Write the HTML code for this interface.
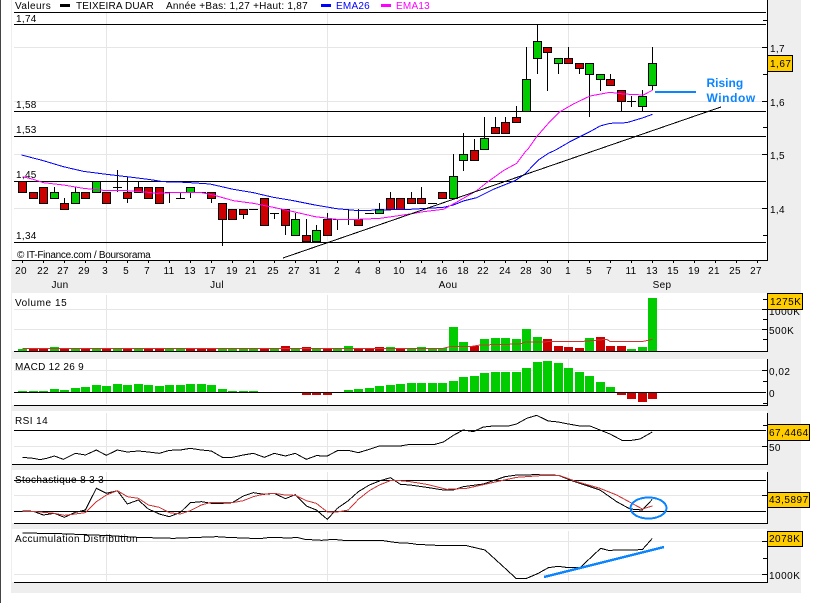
<!DOCTYPE html>
<html><head><meta charset="utf-8"><style>
html,body{margin:0;padding:0;background:#fff}
svg{display:block}
text{font-family:"Liberation Sans",sans-serif;font-size:10px;fill:#000;letter-spacing:.3px}
.v{letter-spacing:.5px}
.t{shape-rendering:crispEdges}
.l{fill:none;stroke-width:1;vector-effect:non-scaling-stroke;shape-rendering:crispEdges}
.b{stroke:#000}.r{stroke:#cc3333}.u{stroke:#0000ff}.m{stroke:#ff00ff}
</style></head><body>
<svg width="823" height="603" viewBox="0 0 823 603" xmlns="http://www.w3.org/2000/svg">
<rect width="823" height="603" fill="#fff"/>
<rect x="0" y="0" width="1" height="603" fill="#444"/>
<g class="t">
<rect x="11" y="261" width="790" height="332" fill="#eeeeee"/>
<rect x="768" y="0" width="33" height="593" fill="#eeeeee"/>
<rect x="11" y="0" width="1" height="261" fill="#eeeeee"/>
<rect x="12" y="293" width="755" height="58" fill="#fff"/>
<rect x="12" y="359" width="755" height="46" fill="#fff"/>
<rect x="12" y="411" width="755" height="53" fill="#fff"/>
<rect x="12" y="470" width="755" height="53" fill="#fff"/>
<rect x="12" y="529" width="755" height="53" fill="#fff"/>
<!-- grid -->
<path fill="none" stroke="#e6e6e6" d="M14 47.5H763M14 101.5H763M14 154.5H763M14 208.5H763M14 309.5H763M14 329.5H763M14 370.5H763M14 446.5H763M14 495.5H763M14 541.5H763M14 574.5H763
M106.5 13V260M327.5 13V260M568.5 13V260M106.5 295V350M327.5 295V350M568.5 295V350M106.5 359V404M327.5 359V404M568.5 359V404M106.5 413V463M327.5 413V463M568.5 413V463M106.5 472V522M327.5 472V522M568.5 472V522M106.5 531V581M327.5 531V581M568.5 531V581"/>
<!-- black lines -->
<path fill="none" stroke="#000" d="M14 12.5H766M14 24.5H766M14 111.5H766M14 136.5H766M14 181.5H766M14 242.5H766M12 260.5H767M14 351.5H767M14 392.5H766M14 405.5H767M14 430.5H766M12 464.5H767M14 480.5H766M14 511.5H766M14 523.5H767M14 582.5H767
M767.5 0V261M767.5 295V352M767.5 359V406M767.5 413V465M767.5 472V524M767.5 531V583
M763 20.5H767M763 74.5H767M763 127.5H767M763 235.5H767M762 47.5H767M762 101.5H767M762 154.5H767M762 208.5H767
M763 299.5H767M762 309.5H767M763 319.5H767M762 329.5H767M763 339.5H767
M762 370.5H767M763 381.5H767M763 403.5H767M763 425.5H767M762 446.5H767M762 495.5H767M762 541.5H767M763 558.5H767M762 574.5H767"/>
<!-- x ticks -->
<path fill="none" stroke="#000" d="M22.5 261v2M43.5 261v2M64.5 261v2M85.5 261v2M106.5 261v2M127.5 261v2M148.5 261v2M169.5 261v2M190.5 261v2M211.5 261v2M232.5 261v2M253.5 261v2M274.5 261v2M295.5 261v2M316.5 261v2M337.5 261v2M358.5 261v2M379.5 261v2M400.5 261v2M421.5 261v2M442.5 261v2M463.5 261v2M484.5 261v2M505.5 261v2M526.5 261v2M547.5 261v2M568.5 261v2M589.5 261v2M610.5 261v2M631.5 261v2M652.5 261v2M673.5 261v2M694.5 261v2M715.5 261v2M736.5 261v2M757.5 261v2"/>
<!-- wicks -->
<path fill="none" stroke="#000" d="M54.5 187v5M64.5 198v5M75.5 187v5M117.5 170v22M113 187.5h9M127.5 177v26M138.5 181v6M169.5 192v11M165 192.5h9M180.5 192v6M176 198.5h9M190.5 192v6M197 192.5h9M211.5 198v5M222.5 219v27M243.5 214v5M249 209.5h9M274.5 213v6M270 213.5h9M285.5 225v10M295.5 213v6M306.5 219v16M316.5 225v5M327.5 213v6M337.5 219v11M333 219.5h9M348.5 209v16M344 219.5h9M358.5 209v10M365 213.5h9M379.5 203v6M390.5 192v6M411.5 192v6M421.5 187v11M428 203.5h9M453.5 154v22M463.5 133v38M474.5 139v11M484.5 117v21M495.5 117v10M505.5 117v5M516.5 106v11M526.5 47v32M537.5 24v50M547.5 52v39M558.5 63v11M568.5 47v11M579.5 68v6M589.5 74v43M600.5 79v12M610.5 74v5M621.5 101v10M631.5 96v11M627 101.5h9M642.5 90v6M642.5 106v5M652.5 47v16M652.5 85v5"/>
<!-- green bodies -->
<path fill="#00cc00" stroke="#000" d="M50.5 192.5h8v6h-8zM71.5 192.5h8v11h-8zM92.5 181.5h8v11h-8zM186.5 187.5h8v5h-8zM291.5 219.5h8v16h-8zM312.5 230.5h8v11h-8zM375.5 209.5h8v4h-8zM449.5 176.5h8v22h-8zM459.5 154.5h8v6h-8zM480.5 138.5h8v11h-8zM522.5 79.5h8v32h-8zM533.5 41.5h8v17h-8zM554.5 58.5h8v5h-8zM585.5 63.5h8v11h-8zM596.5 74.5h8v5h-8zM638.5 96.5h8v10h-8zM648.5 63.5h8v22h-8z"/>
<!-- red bodies -->
<path fill="#cc0000" stroke="#000" d="M18.5 181.5h8v11h-8zM29.5 192.5h8v6h-8zM39.5 187.5h8v16h-8zM60.5 203.5h8v6h-8zM81.5 192.5h8v6h-8zM102.5 192.5h8v11h-8zM123.5 192.5h8v6h-8zM134.5 187.5h8v5h-8zM144.5 187.5h8v11h-8zM155.5 187.5h8v16h-8zM207.5 192.5h8v6h-8zM218.5 203.5h8v16h-8zM228.5 209.5h8v10h-8zM239.5 209.5h8v5h-8zM260.5 198.5h8v27h-8zM281.5 209.5h8v16h-8zM302.5 235.5h8v6h-8zM323.5 219.5h8v16h-8zM354.5 219.5h8v6h-8zM386.5 198.5h8v11h-8zM396.5 198.5h8v11h-8zM407.5 198.5h8v5h-8zM417.5 198.5h8v5h-8zM438.5 192.5h8v6h-8zM470.5 150.5h8v10h-8zM491.5 127.5h8v6h-8zM501.5 122.5h8v11h-8zM512.5 117.5h8v5h-8zM543.5 47.5h8v5h-8zM564.5 58.5h8v5h-8zM575.5 63.5h8v5h-8zM606.5 79.5h8v6h-8zM617.5 90.5h8v11h-8z"/>
<!-- volume -->
<path fill="#00cc00" d="M18 349h9v2h-9zM50 347h9v4h-9zM71 349h9v2h-9zM92 349h9v2h-9zM113 349h9v2h-9zM134 349h9v2h-9zM165 349h9v2h-9zM176 349h9v2h-9zM218 349h9v2h-9zM228 349h9v2h-9zM239 349h9v2h-9zM249 349h9v2h-9zM270 349h9v2h-9zM291 349h9v2h-9zM312 349h9v2h-9zM333 349h9v2h-9zM344 346h9v5h-9zM386 347h9v4h-9zM407 349h9v2h-9zM417 347h9v4h-9zM428 348h9v3h-9zM438 348h9v3h-9zM449 327h9v24h-9zM459 342h9v9h-9zM480 339h9v12h-9zM491 338h9v13h-9zM501 338h9v13h-9zM512 339h9v12h-9zM522 329h9v22h-9zM533 337h9v14h-9zM585 338h9v13h-9zM627 349h9v2h-9zM638 347h9v4h-9zM648 298h9v53h-9z"/>
<path fill="#cc0000" d="M29 349h9v2h-9zM39 349h9v2h-9zM60 349h9v2h-9zM81 349h9v2h-9zM102 349h9v2h-9zM123 349h9v2h-9zM144 349h9v2h-9zM155 349h9v2h-9zM186 349h9v2h-9zM197 349h9v2h-9zM207 349h9v2h-9zM260 349h9v2h-9zM281 346h9v5h-9zM302 347h9v4h-9zM323 349h9v2h-9zM354 349h9v2h-9zM365 349h9v2h-9zM375 347h9v4h-9zM396 349h9v2h-9zM470 346h9v5h-9zM543 339h9v12h-9zM554 346h9v5h-9zM564 347h9v4h-9zM575 348h9v3h-9zM596 337h9v14h-9zM606 346h9v5h-9zM617 346h9v5h-9z"/>
<!-- MACD -->
<path fill="#00cc00" d="M18 391h9V392h-9zM29 391h9V392h-9zM39 391h9V392h-9zM50 389h9V392h-9zM60 390h9V392h-9zM71 388h9V392h-9zM81 387h9V392h-9zM92 385h9V392h-9zM102 386h9V392h-9zM113 384h9V392h-9zM123 385h9V392h-9zM134 384h9V392h-9zM144 385h9V392h-9zM155 386h9V392h-9zM165 385h9V392h-9zM176 385h9V392h-9zM186 384h9V392h-9zM197 384h9V392h-9zM207 385h9V392h-9zM218 389h9V392h-9zM228 391h9V392h-9zM239 391h9V392h-9zM249 391h9V392h-9zM344 390h9V392h-9zM354 389h9V392h-9zM365 388h9V392h-9zM375 386h9V392h-9zM386 385h9V392h-9zM396 384h9V392h-9zM407 383h9V392h-9zM417 383h9V392h-9zM428 383h9V392h-9zM438 383h9V392h-9zM449 381h9V392h-9zM459 377h9V392h-9zM470 376h9V392h-9zM480 373h9V392h-9zM491 372h9V392h-9zM501 372h9V392h-9zM512 372h9V392h-9zM522 368h9V392h-9zM533 362h9V392h-9zM543 361h9V392h-9zM554 363h9V392h-9zM564 368h9V392h-9zM575 372h9V392h-9zM585 376h9V392h-9zM596 382h9V392h-9zM606 387h9V392h-9z"/>
<path fill="#cc0000" d="M302 393h9v2h-9zM312 393h9v2h-9zM323 393h9v2h-9zM617 393h9v2h-9zM627 393h9v6h-9zM638 393h9v9h-9zM648 393h9v6h-9z"/>
</g>
<!-- EMA26 -->
<g transform="translate(0 150) scale(.33333)"><polyline class="l u" points="65,15 130,32 190,50 250,64 320,73 380,80 445,88 490,95 555,97 630,102 700,118 760,128 820,142 880,152 945,165 1010,176 1075,182 1140,180 1230,178"/></g>
<g transform="translate(410 150) scale(.33333)"><polyline class="l u" points="0,178 100,172 130,165 160,153 200,143 250,118 315,92 345,72 385,30 415,10 437,0"/></g>
<g transform="translate(410 0) scale(.33333)"><polyline class="l u" points="437,450 480,425 540,395 570,378 600,370 650,368 700,353 727,343"/></g>
<!-- EMA13 -->
<g transform="translate(0 150) scale(.33333)"><polyline class="l m" points="67,80 100,88 130,98 190,105 250,115 320,122 380,122 445,127 470,130 540,127 600,127 640,135 700,152 760,160 820,172 880,185 945,200 1010,208 1075,208 1140,205 1230,192"/></g>
<g transform="translate(410 150) scale(.33333)"><polyline class="l m" points="0,192 40,185 100,178 130,162 160,145 200,122 230,98 280,62 320,40 350,0"/></g>
<g transform="translate(410 0) scale(.33333)"><polyline class="l m" points="352,450 380,410 415,370 450,335 490,312 540,288 600,277 640,282 700,285 727,271"/></g>
<!-- trend -->
<line class="l b" x1="283" y1="258" x2="721" y2="107"/>
<!-- Vol MA -->
<g transform="translate(0 290) scale(.33333)"><polyline class="l r" points="67,176 1230,176"/></g>
<g transform="translate(410 290) scale(.33333)"><polyline class="l r" points="0,176 100,175 120,170 180,170 210,165 330,162 345,156 520,154 590,148 600,154 700,154 727,148"/></g>
<!-- RSI -->
<g transform="translate(0 290) scale(.33333)"><polyline class="l b" points="67,502 100,505 120,509 140,505 163,498 190,508 226,490 256,495 289,480 319,496 352,480 382,486 415,483 445,486 478,490 508,481 541,480 571,475 604,480 634,483 667,502 697,502 730,495 760,490 793,502 823,490 856,498 886,490 919,508 949,497 982,498 1012,482 1045,481 1075,488 1108,478 1138,468 1171,468 1201,468 1230,463"/></g>
<g transform="translate(410 290) scale(.33333)"><polyline class="l b" points="0,463 75,463 100,456 130,436 160,420 190,425 220,411 250,408 295,408 320,402 350,385 380,376 415,393 445,396 475,402 510,408 540,408 570,420 600,432 636,451 665,451 690,447 727,426"/></g>
<!-- Stoch -->
<g transform="translate(0 460) scale(.33333)">
<polyline class="l b" points="67,153 100,154 130,165 163,160 193,172 226,157 256,150 289,85 319,100 352,92 382,132 415,120 445,147 478,162 508,170 541,157 571,128 604,125 634,130 667,130 697,128 730,108 760,98 793,103 823,100 856,116 886,104 919,138 949,150 982,178 1012,145 1045,122 1075,95 1108,75 1138,63 1171,53 1201,73 1230,75"/>
<polyline class="l r" points="67,154 100,154 130,157 163,160 193,166 226,162 256,158 289,125 319,105 352,92 382,110 415,115 445,135 478,142 508,158 541,162 571,152 604,135 634,127 667,127 697,128 730,122 760,110 793,102 823,100 856,105 886,106 919,122 949,130 982,156 1012,156 1045,150 1075,118 1108,92 1138,75 1171,62 1201,62 1230,65"/>
</g>
<g transform="translate(410 460) scale(.33333)">
<polyline class="l b" points="0,75 50,82 100,90 130,90 160,80 220,72 285,50 320,45 380,44 445,46 480,60 570,90 620,125 660,147 697,150 727,118"/>
<polyline class="l r" points="0,65 50,73 110,88 170,85 260,65 320,52 390,47 450,47 500,65 570,85 620,105 697,147 727,138"/>
</g>
<!-- AD -->
<g transform="translate(0 460) scale(.33333)"><polyline class="l b" points="67,219 180,221 330,227 412,232 520,235 650,230 680,232 780,236 810,232 870,234 890,232 915,238 965,241 1000,238 1030,241 1150,242 1190,248 1230,250"/></g>
<g transform="translate(410 460) scale(.33333)"><polyline class="l b" points="0,250 20,253 80,256 165,256 225,270 280,320 318,355 350,355 385,340 415,323 445,319 475,323 510,323 572,265 595,271 697,269 727,235"/></g>
<!-- annotations -->
<g fill="none" stroke="#0a84ff" stroke-width="2" shape-rendering="crispEdges">
<path d="M655 92H696"/>
<ellipse cx="648.5" cy="508" rx="18" ry="10.5"/>
<path d="M544 577L664 547" stroke-width="2.5"/>
</g>
<text x="706.5" y="87" textLength="37" style="font-weight:bold;font-size:12px;fill:#0a84ff">Rising</text>
<text x="706.5" y="102" textLength="49" style="font-weight:bold;font-size:12px;fill:#0a84ff">Window</text>
<!-- legend -->
<text x="15" y="9" textLength="36">Valeurs</text>
<rect x="60" y="4" width="10" height="3" fill="#000"/>
<text x="76" y="9" textLength="78">TEIXEIRA DUAR</text>
<text x="166" y="9" textLength="142">Année +Bas: 1,27 +Haut: 1,87</text>
<rect x="321" y="4" width="10" height="3" fill="#0000ff"/>
<text x="336" y="9" textLength="34" style="fill:#0000ff">EMA26</text>
<rect x="381" y="4" width="10" height="3" fill="#ff00ff"/>
<text x="396" y="9" textLength="34" style="fill:#ff00ff">EMA13</text>
<!-- price labels -->
<text x="16" y="22">1,74</text><text x="16" y="108">1,58</text><text x="16" y="133">1,53</text><text x="16" y="178">1,45</text><text x="16" y="239">1,34</text>
<text x="17" y="258" textLength="134">© IT-Finance.com / Boursorama</text>
<!-- x labels -->
<g text-anchor="middle">
<text x="21" y="274">20</text><text x="43" y="274">22</text><text x="63" y="274">27</text><text x="84" y="274">29</text><text x="105" y="274">3</text><text x="126" y="274">5</text><text x="147" y="274">7</text><text x="169" y="274">11</text><text x="190" y="274">13</text><text x="210" y="274">17</text><text x="232" y="274">19</text><text x="251" y="274">21</text><text x="273" y="274">25</text><text x="294" y="274">27</text><text x="315" y="274">31</text><text x="337" y="274">2</text><text x="358" y="274">4</text><text x="378" y="274">8</text><text x="399" y="274">10</text><text x="421" y="274">14</text><text x="442" y="274">16</text><text x="463" y="274">18</text><text x="483" y="274">22</text><text x="505" y="274">24</text><text x="526" y="274">28</text><text x="546" y="274">30</text><text x="568" y="274">1</text><text x="589" y="274">5</text><text x="609" y="274">7</text><text x="631" y="274">11</text><text x="652" y="274">13</text><text x="673" y="274">15</text><text x="694" y="274">19</text><text x="714" y="274">21</text><text x="735" y="274">25</text><text x="756" y="274">27</text>
<text x="60" y="288">Jun</text><text x="217" y="288">Jul</text><text x="448" y="288">Aou</text><text x="662" y="288">Sep</text>
</g>
<!-- panel titles -->
<text x="15" y="306" textLength="52">Volume 15</text>
<text x="15" y="370" textLength="69">MACD 12 26 9</text>
<text x="15" y="424" textLength="33">RSI 14</text>
<text x="15" y="483" textLength="89">Stochastique 8 3 3</text>
<text x="15" y="542" textLength="123">Accumulation Distribution</text>
<!-- axis labels -->
<text x="770" y="52">1,7</text><text x="770" y="106">1,6</text><text x="770" y="159">1,5</text><text x="770" y="213">1,4</text>
<text class="v" x="769" y="315">1000K</text><text class="v" x="769" y="334">500K</text><text class="v" x="769" y="375">0,02</text><text x="769" y="397">0</text><text x="769" y="451">50</text><text class="v" x="769" y="579">1000K</text>
<!-- tags -->
<g fill="#ffcc00" stroke="#000" class="t">
<rect x="767.5" y="55.5" width="25" height="16"/>
<rect x="767.5" y="293.5" width="35" height="16"/>
<rect x="767.5" y="424.5" width="42" height="16"/>
<rect x="767.5" y="492.5" width="42" height="15"/>
<rect x="767.5" y="531.5" width="35" height="15"/>
</g>
<text class="v" x="770" y="67">1,67</text>
<text class="v" x="770" y="305">1275K</text>
<text class="v" x="769" y="436">67,4464</text>
<text class="v" x="769" y="503">43,5897</text>
<text class="v" x="769" y="542">2078K</text>
</svg>
</body></html>
